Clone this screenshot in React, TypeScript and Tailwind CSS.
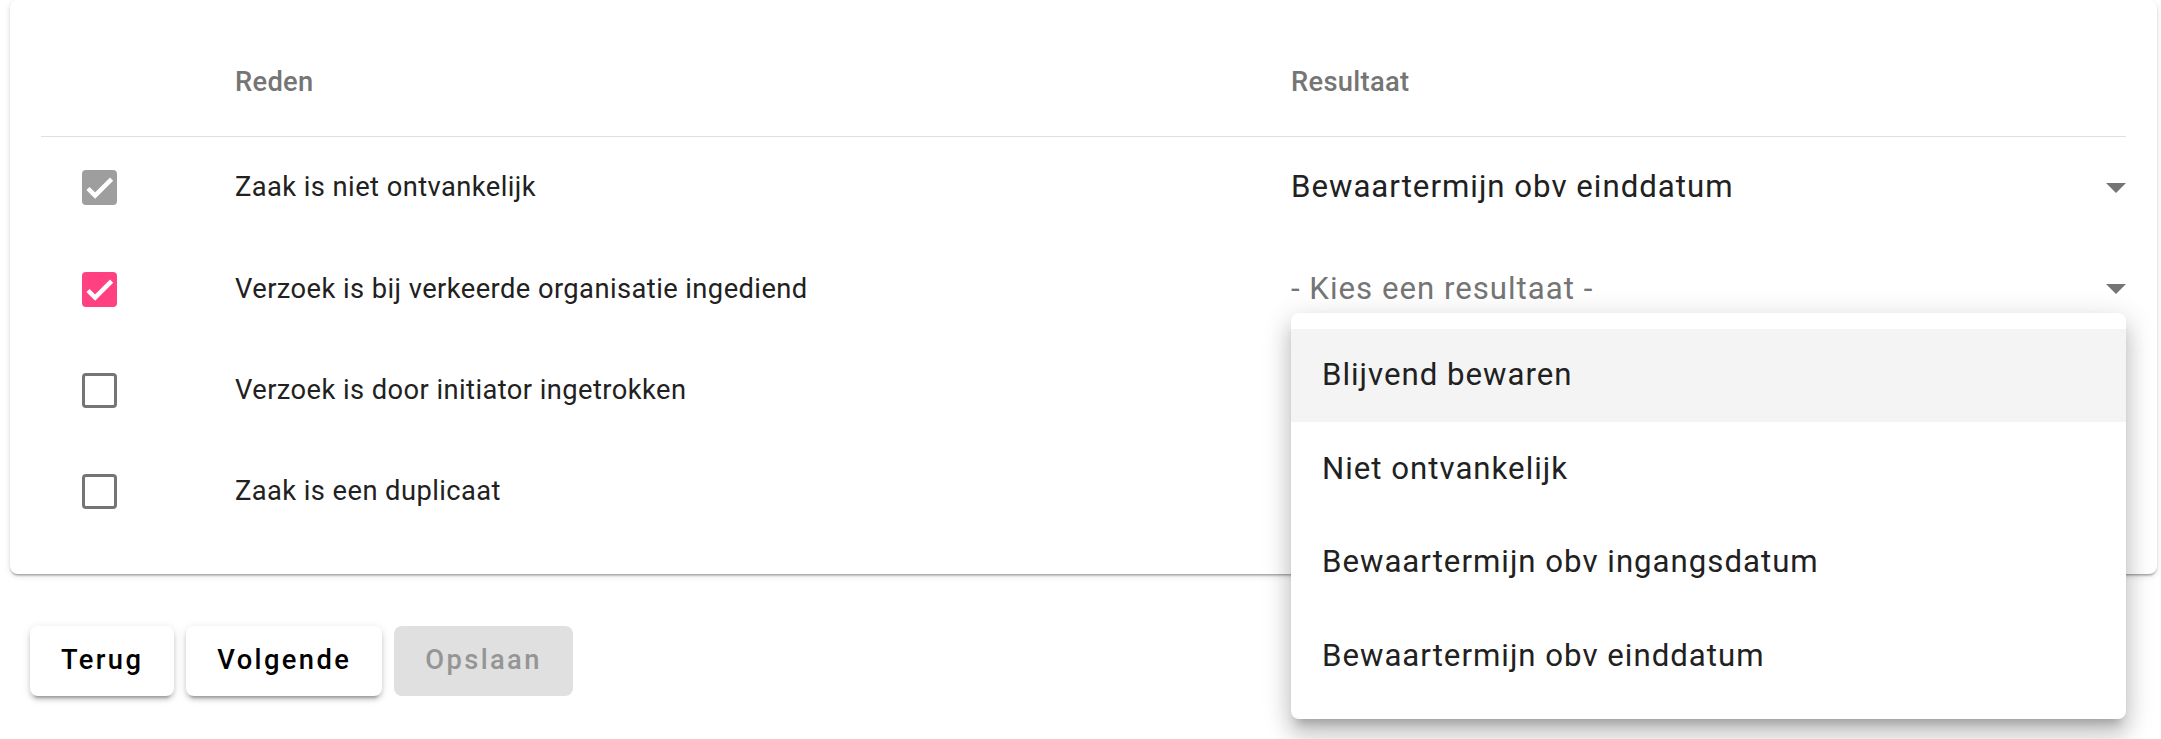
import React from 'react';

type Row = {
  reden: string;
  state: 'disabled' | 'checked' | 'empty';
  resultaat?: string;
  placeholder?: boolean;
};

const rows: Row[] = [
  { reden: 'Zaak is niet ontvankelijk', state: 'disabled', resultaat: 'Bewaartermijn obv einddatum' },
  { reden: 'Verzoek is bij verkeerde organisatie ingediend', state: 'checked', resultaat: '- Kies een resultaat -', placeholder: true },
  { reden: 'Verzoek is door initiator ingetrokken', state: 'empty' },
  { reden: 'Zaak is een duplicaat', state: 'empty' },
];

const options = [
  'Blijvend bewaren',
  'Niet ontvankelijk',
  'Bewaartermijn obv ingangsdatum',
  'Bewaartermijn obv einddatum',
];

const Checkbox: React.FC<{ state: Row['state'] }> = ({ state }) => {
  if (state === 'empty') {
    return <div className="h-[35px] w-[35px] rounded-[4px] border-[3.5px] border-[#757575]" />;
  }
  return (
    <div
      className={`flex h-[35px] w-[35px] items-center justify-center rounded-[4px] ${
        state === 'checked' ? 'bg-[#ff4081]' : 'bg-[#9e9e9e]'
      }`}
    >
      <svg viewBox="0 0 24 24" className="h-[35px] w-[35px]">
        <path d="M4.1 12.7 9 17.6 20.3 6.3" fill="none" stroke="#ffffff" strokeWidth="3.1" />
      </svg>
    </div>
  );
};

const Arrow: React.FC = () => (
  <div className="h-0 w-0 border-x-[10px] border-t-[10px] border-x-transparent border-t-[#757575]" />
);

const App: React.FC = () => {
  return (
    <div className="min-h-screen bg-white pl-[10px] pr-[4px] font-['Roboto',sans-serif]">
      {/* Card */}
      <div className="relative rounded-[8px] bg-white px-[31px] pt-[28px] pb-[31px] shadow-[0_3px_2px_-2px_rgba(0,0,0,0.2),0_2px_2px_0_rgba(0,0,0,0.14),0_2px_6px_0_rgba(0,0,0,0.12)]">
        <div className="flex h-[109px] items-center border-b border-[#e0e0e0] text-[27.3px] font-medium tracking-[0.3px] text-[#757575]">
          <div className="w-[194px]" />
          <div className="w-[1056px]">Reden</div>
          <div className="flex-1">Resultaat</div>
        </div>

        {rows.map((row) => (
          <div key={row.reden} className="flex h-[101.4px] items-center">
            <div className="w-[194px] pl-[41px]">
              <Checkbox state={row.state} />
            </div>
            <div className="w-[1056px] text-[27.3px] tracking-[0.43px] text-[#212121]">{row.reden}</div>
            <div className="flex flex-1 items-center justify-between">
              {row.resultaat ? (
                <>
                  <span
                    className={`text-[31.2px] tracking-[1px] ${
                      row.placeholder ? 'text-[#757575]' : 'text-[#212121]'
                    }`}
                  >
                    {row.resultaat}
                  </span>
                  <Arrow />
                </>
              ) : null}
            </div>
          </div>
        ))}

        {/* Open select panel */}
        <div className="absolute left-[1281px] top-[313px] z-10 w-[835px] rounded-[8px] bg-white py-[15.6px] shadow-[0_10px_10px_-6px_rgba(0,0,0,0.2),0_16px_20px_2px_rgba(0,0,0,0.14),0_6px_28px_4px_rgba(0,0,0,0.12)]">
          {options.map((opt, i) => (
            <div
              key={opt}
              className={`flex h-[93.6px] items-center px-[31px] text-[31.2px] tracking-[1px] text-[#212121] ${
                i === 0 ? 'bg-[#f4f4f4]' : ''
              }`}
            >
              {opt}
            </div>
          ))}
        </div>
      </div>

      {/* Buttons */}
      <div className="mt-[52px] flex gap-[12px] pl-[20px]">
        <button className="h-[70px] rounded-[8px] bg-white px-[31px] text-[27.3px] font-medium tracking-[2.4px] text-black shadow-[0_6px_2px_-4px_rgba(0,0,0,0.2),0_4px_4px_0_rgba(0,0,0,0.14),0_2px_10px_0_rgba(0,0,0,0.12)]">
          Terug
        </button>
        <button className="h-[70px] rounded-[8px] bg-white px-[31px] text-[27.3px] font-medium tracking-[2.4px] text-black shadow-[0_6px_2px_-4px_rgba(0,0,0,0.2),0_4px_4px_0_rgba(0,0,0,0.14),0_2px_10px_0_rgba(0,0,0,0.12)]">
          Volgende
        </button>
        <button disabled className="h-[70px] rounded-[8px] bg-[#e0e0e0] px-[31px] text-[27.3px] font-medium tracking-[2.4px] text-[#959595]">
          Opslaan
        </button>
      </div>
    </div>
  );
};

export default App;
